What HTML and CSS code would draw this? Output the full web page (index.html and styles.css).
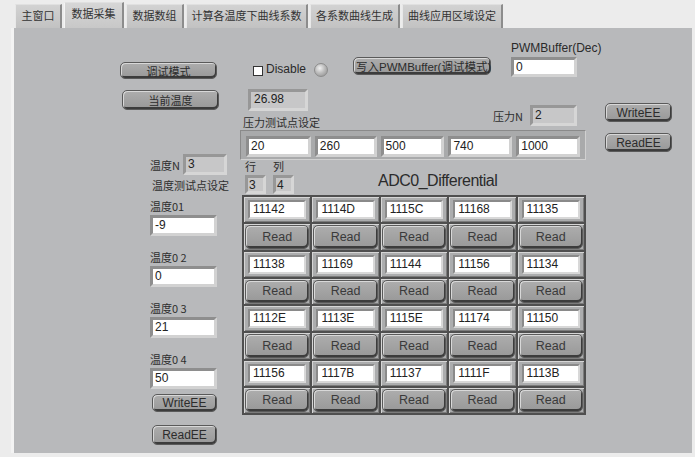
FILE: index.html
```html
<!DOCTYPE html>
<html>
<head>
  <meta charset="UTF-8">
  <title>数据采集</title>
  <link rel="stylesheet" href="styles.css">
</head>
<body>
  <div class="window">
    <div class="tabs">
      <div class="tab t1">主窗口</div>
      <div class="tab t2 active">数据采集</div>
      <div class="tab t3">数据数组</div>
      <div class="tab t4">计算各温度下曲线系数</div>
      <div class="tab t5">各系数曲线生成</div>
      <div class="tab t6">曲线应用区域设定</div>
    </div>

    <div class="panel">
      <!-- left column: mode buttons + temperature points -->
      <div class="col-temp">
        <button class="btn btn-mode">调试模式</button>
        <button class="btn btn-cur">当前温度</button>
        <div class="n-row">
          <span class="lbl">温度N</span>
          <div class="ind n-field">3</div>
        </div>
        <div class="lbl set-lbl">温度测试点设定</div>
        <div class="temp-item first">
          <div class="lbl">温度01</div>
          <div class="ctl temp-field">-9</div>
        </div>
        <div class="temp-item">
          <div class="lbl">温度0 2</div>
          <div class="ctl temp-field">0</div>
        </div>
        <div class="temp-item">
          <div class="lbl">温度0 3</div>
          <div class="ctl temp-field">21</div>
        </div>
        <div class="temp-item">
          <div class="lbl">温度0 4</div>
          <div class="ctl temp-field">50</div>
        </div>
        <button class="btn btn-ee ee-write">WriteEE</button>
        <button class="btn btn-ee ee-read">ReadEE</button>
      </div>

      <!-- middle column -->
      <div class="col-main">
        <div class="top-row">
          <div class="check-group">
            <span class="checkbox"></span>
            <span class="latin">Disable</span>
            <span class="led"></span>
          </div>
          <button class="btn btn-pwm">写入PWMBuffer(调试模式)</button>
          <div class="pwm-group">
            <div class="latin">PWMBuffer(Dec)</div>
            <div class="ctl pwm-field">0</div>
          </div>
        </div>

        <div class="second-row">
          <div class="cur-group">
            <div class="ind cur-field">26.98</div>
            <div class="lbl press-lbl">压力测试点设定</div>
          </div>
          <div class="pn-group">
            <span class="lbl">压力N</span>
            <div class="ind pn-field">2</div>
          </div>
        </div>

        <div class="press-frame">
          <div class="ctl pf w66">20</div>
          <div class="ctl pf w62">260</div>
          <div class="ctl pf">500</div>
          <div class="ctl pf">740</div>
          <div class="ctl pf">1000</div>
        </div>

        <div class="rc-row">
          <div class="rc">
            <div class="lbl">行</div>
            <div class="ind rc-field">3</div>
          </div>
          <div class="rc rc2">
            <div class="lbl">列</div>
            <div class="ind rc-field">4</div>
          </div>
          <div class="adc-title">ADC0_Differential</div>
        </div>

        <div class="adc-grid">
          <div class="cell"><div class="val">11142</div></div>
          <div class="cell"><div class="val">1114D</div></div>
          <div class="cell"><div class="val">1115C</div></div>
          <div class="cell"><div class="val">11168</div></div>
          <div class="cell"><div class="val">11135</div></div>
          <div class="cell read"><button class="btn">Read</button></div>
          <div class="cell read"><button class="btn">Read</button></div>
          <div class="cell read"><button class="btn">Read</button></div>
          <div class="cell read"><button class="btn">Read</button></div>
          <div class="cell read"><button class="btn">Read</button></div>

          <div class="cell"><div class="val">11138</div></div>
          <div class="cell"><div class="val">11169</div></div>
          <div class="cell"><div class="val">11144</div></div>
          <div class="cell"><div class="val">11156</div></div>
          <div class="cell"><div class="val">11134</div></div>
          <div class="cell read"><button class="btn">Read</button></div>
          <div class="cell read"><button class="btn">Read</button></div>
          <div class="cell read"><button class="btn">Read</button></div>
          <div class="cell read"><button class="btn">Read</button></div>
          <div class="cell read"><button class="btn">Read</button></div>

          <div class="cell"><div class="val">1112E</div></div>
          <div class="cell"><div class="val">1113E</div></div>
          <div class="cell"><div class="val">1115E</div></div>
          <div class="cell"><div class="val">11174</div></div>
          <div class="cell"><div class="val">11150</div></div>
          <div class="cell read"><button class="btn">Read</button></div>
          <div class="cell read"><button class="btn">Read</button></div>
          <div class="cell read"><button class="btn">Read</button></div>
          <div class="cell read"><button class="btn">Read</button></div>
          <div class="cell read"><button class="btn">Read</button></div>

          <div class="cell"><div class="val">11156</div></div>
          <div class="cell"><div class="val">1117B</div></div>
          <div class="cell"><div class="val">11137</div></div>
          <div class="cell"><div class="val">1111F</div></div>
          <div class="cell"><div class="val">1113B</div></div>
          <div class="cell read"><button class="btn">Read</button></div>
          <div class="cell read"><button class="btn">Read</button></div>
          <div class="cell read"><button class="btn">Read</button></div>
          <div class="cell read"><button class="btn">Read</button></div>
          <div class="cell read"><button class="btn">Read</button></div>
        </div>
      </div>

      <!-- right column -->
      <div class="col-ee">
        <button class="btn btn-ee2">WriteEE</button>
        <button class="btn btn-ee2 ee2-read">ReadEE</button>
      </div>
    </div>
  </div>
</body>
</html>
```

FILE: styles.css
```css
*{
  margin: 0;
  padding: 0;
  box-sizing: border-box;
}

body{
  background: #ececec;
  font-family: "Liberation Sans", "Noto Sans CJK SC", sans-serif;
  color: #2e2e2e;
  width: 695px;
  height: 457px;
  overflow: hidden;
}

.window{
  margin-left: 11px;
  width: 681px;
}

/* tab strip */
.tabs{
  display: flex;
  align-items: flex-end;
  height: 28px;
  padding-left: 4px;
}
.tab{
  height: 24px;
  margin-right: 2px;
  background: linear-gradient(#d2d2d2, #c2c2c2);
  border-left: 1px solid #e8e8e8;
  border-top: 1px solid #e0e0e0;
  border-right: 2px solid #8c8c8c;
  font-family: "Noto Sans CJK SC", sans-serif;
  font-size: 11px;
  line-height: 21px;
  text-align: center;
  color: #333;
}
.tab.active{
  height: 26px;
  background: linear-gradient(#d6d6d6, #c8c8c8);
  border-left: 1px solid #f4f4f4;
  line-height: 21px;
}
.t1{ width: 47px; }
.t2{ width: 60px; }
.t3{ width: 58px; }
.t4{ width: 122px; }
.t5{ width: 90px; }
.t6{ width: 101px; }

/* main panel */
.panel{
  display: flex;
  align-items: flex-start;
  height: 425px;
  border-left: 3px solid #f3f3f3;
  background: #b8b9bb;
  padding-left: 106px;
}

.lbl{
  font-family: "Noto Sans CJK SC", sans-serif;
  font-size: 11px;
  line-height: 12px;
  color: #2e2e2e;
  white-space: nowrap;
}
.latin{
  font-size: 12px;
  line-height: 13px;
  color: #2a2a2a;
  white-space: nowrap;
}

/* LabVIEW style controls */
.btn{
  display: block;
  background: linear-gradient(#adadad, #989898);
  border: 1px solid #5a5a5a;
  border-radius: 5px;
  box-shadow: inset 1px 1px 0 #d8d8d8, inset -1px -2px 0 #3c3c3c;
  font-family: "Liberation Sans", "Noto Sans CJK SC", sans-serif;
  font-size: 12px;
  color: #2c2c2c;
  cursor: pointer;
  outline: none;
  white-space: nowrap;
}
.ctl,
.ind{
  background: #fff;
  border: 3px solid;
  border-color: #8e8e8e #d2d2d2 #d2d2d2 #8e8e8e;
  font-size: 12px;
  line-height: 15px;
  padding-left: 2px;
  color: #222;
}
.ind{
  background: #c7c7c8;
  border-color: #979797 #d6d6d6 #d6d6d6 #979797;
}

/* left column */
.col-temp{
  width: 107px;
}
.btn-mode{
  margin-top: 34px;
  width: 97px;
  height: 17px;
  font-size: 11px;
}
.btn-cur{
  margin-top: 11px;
  margin-left: 2px;
  width: 97px;
  height: 20px;
  font-size: 11px;
}
.n-row{
  display: flex;
  align-items: center;
  margin-top: 44px;
  margin-left: 30px;
}
.n-field{
  margin-left: 3px;
  width: 44px;
  height: 21px;
}
.set-lbl{
  margin-top: 4px;
  margin-left: 32px;
}
.temp-item{
  margin-top: 15px;
  margin-left: 30px;
}
.temp-item.first{
  margin-top: 9px;
}
.temp-field{
  margin-top: 3px;
  width: 67px;
  height: 21px;
}
.btn-ee{
  margin-left: 32px;
  width: 65px;
  height: 18px;
}
.ee-write{
  margin-top: 5px;
}
.ee-read{
  margin-top: 13px;
  height: 20px;
}

/* middle column */
.col-main{
  margin-left: 13px;
  width: 346px;
}
.top-row{
  display: flex;
  align-items: flex-end;
  margin-top: 14px;
}
.check-group{
  display: flex;
  align-items: center;
  margin-left: 13px;
  height: 15px;
}
.checkbox{
  width: 10px;
  height: 10px;
  background: #fff;
  border: 1px solid #333;
  margin-top: 3px;
  margin-right: 3px;
}
.led{
  width: 14px;
  height: 14px;
  margin-left: 8px;
  border-radius: 50%;
  background: radial-gradient(circle at 40% 35%, #f0f0f0 0, #bdbdbd 45%, #8a8a8a 100%);
  border: 1px solid #8c8c8c;
}
.btn-pwm{
  margin-left: 25px;
  margin-bottom: 2px;
  width: 138px;
  height: 18px;
  font-size: 11.5px;
  padding: 0 2px;
}
.pwm-group{
  margin-left: 20px;
}
.pwm-field{
  margin-top: 2px;
  width: 66px;
  height: 20px;
}

.second-row{
  display: flex;
  align-items: flex-end;
  margin-top: 12px;
}
.cur-field{
  margin-left: 8px;
  width: 60px;
  height: 22px;
  padding-left: 3px;
}
.press-lbl{
  margin-top: 5px;
  margin-left: 3px;
}
.pn-group{
  display: flex;
  align-items: center;
  margin-left: auto;
  margin-right: 9px;
  margin-bottom: 2px;
}
.pn-field{
  margin-left: 7px;
  width: 47px;
  height: 21px;
}

.press-frame{
  display: flex;
  gap: 4px;
  margin-top: 2px;
  height: 30px;
  padding: 5px 5px 4px 5px;
  background: #a9aaab;
  border: 1px solid;
  border-color: #8a8a8a #d0d0d0 #d0d0d0 #8a8a8a;
}
.pf{
  width: 64px;
  height: 21px;
}
.pf.w66{ width: 65px; }
.pf.w62{ width: 62px; }

.rc-row{
  display: flex;
  align-items: flex-end;
}
.rc{
  margin-left: 5px;
}
.rc2{
  margin-left: 7px;
}
.rc-field{
  margin-top: 3px;
  width: 21px;
  height: 19px;
  padding-left: 1px;
}
.adc-title{
  margin-left: 84px;
  margin-bottom: 3px;
  font-size: 16px;
  letter-spacing: -0.5px;
  line-height: 20px;
  color: #2b2b2b;
}

.adc-grid{
  display: grid;
  grid-template-columns: repeat(5, 1fr);
  grid-template-rows: repeat(8, 1fr);
  gap: 2px;
  margin-top: 1px;
  margin-left: 2px;
  width: 344px;
  height: 220px;
  padding: 2px;
  background: #4f4f4f;
}
.cell{
  background: #acadae;
  box-shadow: inset 1px 1px 0 #d6d6d6, inset -1px -1px 0 #7c7c7c;
  padding: 3px 4px;
}
.cell .val{
  height: 100%;
  background: #fff;
  border: 2px solid;
  border-color: #8a8a8a #d8d8d8 #d8d8d8 #8a8a8a;
  font-size: 12px;
  line-height: 15px;
  padding-left: 3px;
  color: #222;
}
.cell.read{
  padding: 1px;
}
.cell.read .btn{
  width: 100%;
  height: 100%;
  font-size: 12.5px;
  color: #3a3a3a;
}

/* right column */
.col-ee{
  margin-left: 19px;
  margin-top: 75px;
}
.btn-ee2{
  width: 67px;
  height: 19px;
}
.ee2-read{
  margin-top: 11px;
}
```
